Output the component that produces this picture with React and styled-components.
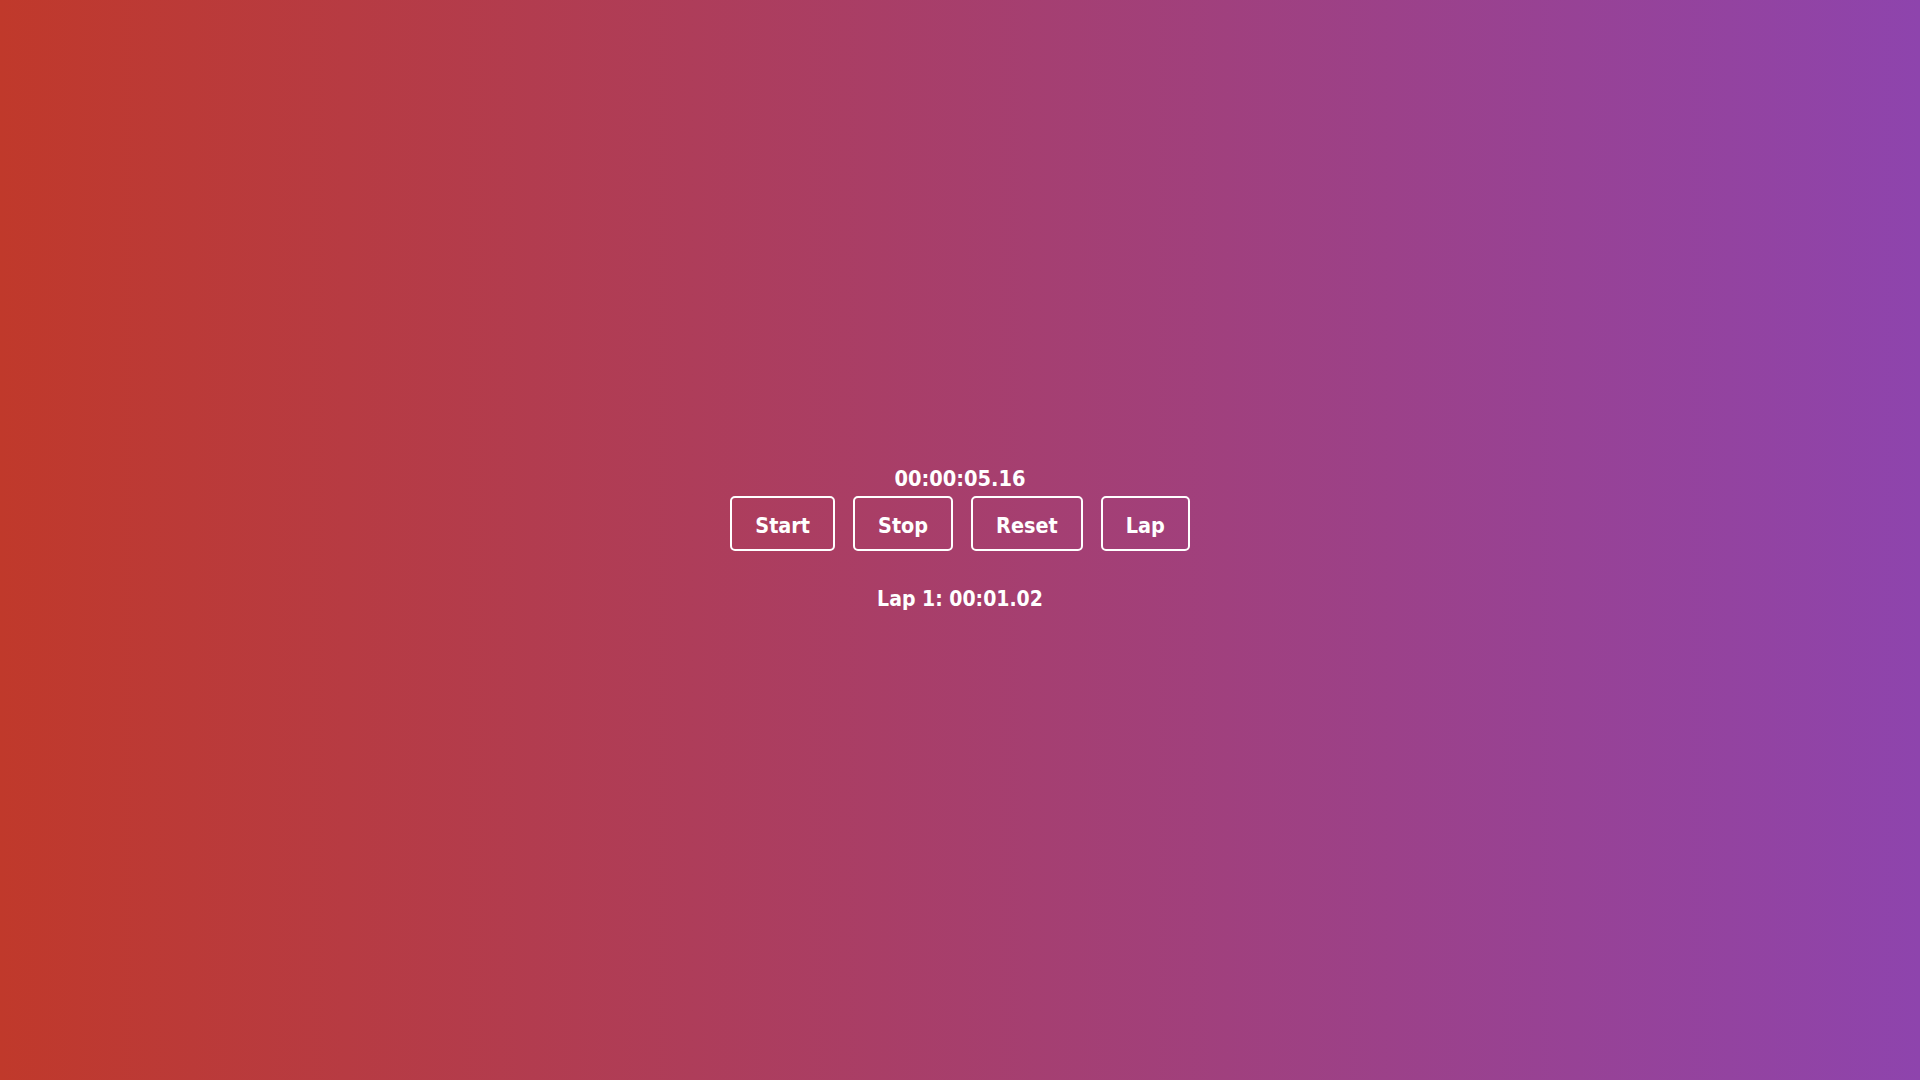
import React from "react";
import styled, { createGlobalStyle } from "styled-components";

const GlobalStyle = createGlobalStyle`
  html, body { margin: 0; padding: 0; }
  body {
    min-height: 100vh;
    background: linear-gradient(to right, #c0392b, #8e44ad);
    font-family: "DejaVu Sans Condensed", "DejaVu Sans", sans-serif;
    color: #ffffff;
  }
`;

const Page = styled.main`
  box-sizing: border-box;
  height: 100vh;
  padding-bottom: 3px;
  display: flex;
  flex-direction: column;
  align-items: center;
  justify-content: center;
`;

const Display = styled.div`
  font-size: 21.6px;
  font-weight: bold;
  line-height: normal;
  margin-bottom: 5.5px;
`;

const Controls = styled.div`
  display: flex;
  gap: 18px;
`;

const Button = styled.button`
  box-sizing: border-box;
  height: 55px;
  padding: 3px 23px 0;
  background: transparent;
  border: 2px solid #ffffff;
  border-radius: 5px;
  color: #ffffff;
  font-family: inherit;
  font-size: 21.4px;
  font-weight: bold;
  cursor: pointer;
`;

const LapList = styled.ul`
  list-style: none;
  margin: 36px 0 0;
  padding: 0;
`;

const LapItem = styled.li`
  font-size: 21px;
  font-weight: bold;
  text-align: center;
`;

export default function App() {
  const laps = ["00:01.02"];
  return (
    <>
      <GlobalStyle />
      <Page>
        <Display>00:00:05.16</Display>
        <Controls>
          <Button>Start</Button>
          <Button>Stop</Button>
          <Button>Reset</Button>
          <Button>Lap</Button>
        </Controls>
        <LapList>
          {laps.map((t, i) => (
            <LapItem key={i}>
              Lap {i + 1}: {t}
            </LapItem>
          ))}
        </LapList>
      </Page>
    </>
  );
}
